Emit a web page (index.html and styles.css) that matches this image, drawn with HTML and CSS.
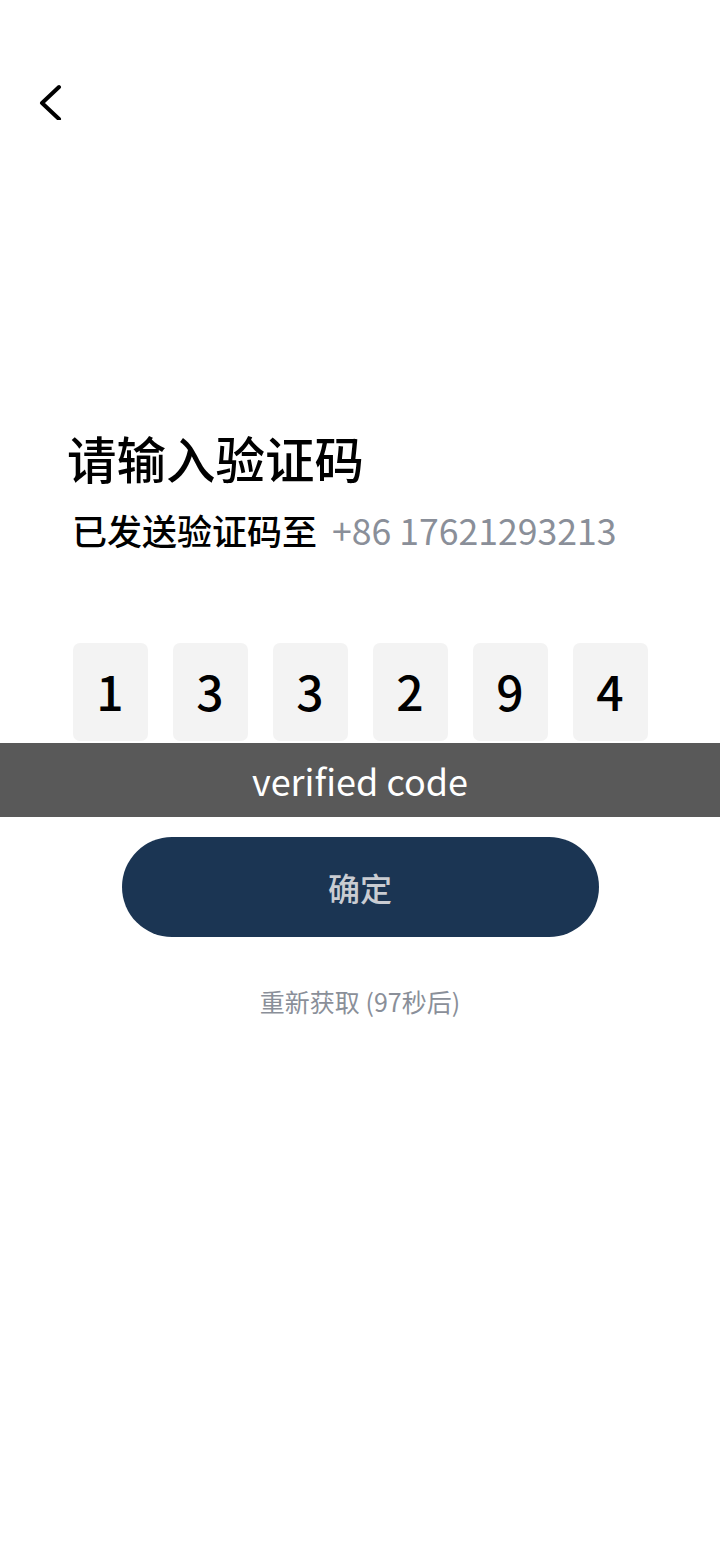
FILE: index.html
```html
<!DOCTYPE html>
<html lang="zh-CN">
<head>
  <meta charset="UTF-8" />
  <meta name="viewport" content="width=device-width, initial-scale=1.0"/>
  <title>验证码</title>
  <link rel="stylesheet" href="styles.css">
</head>
<body>
  <div class="page">
    <div class="top-bar">
      <a href="#" class="back-btn">
        <svg width="40" height="40" viewBox="0 0 40 40">
          <polyline points="29,7 12,23 29,39" fill="none" stroke="#000" stroke-width="4" stroke-linecap="round" stroke-linejoin="round"/>
        </svg>
      </a>
    </div>

    <div class="head">
      <h1>请输入验证码</h1>
      <p class="sub">已发送验证码至<span class="phone">+86 17621293213</span></p>
    </div>

    <div class="code-row">
      <div class="code-box">1</div>
      <div class="code-box">3</div>
      <div class="code-box">3</div>
      <div class="code-box">2</div>
      <div class="code-box">9</div>
      <div class="code-box">4</div>
    </div>

    <div class="toast">verified code</div>

    <button class="confirm-btn">确定</button>

    <p class="resend">重新获取 (97秒后)</p>
  </div>
</body>
</html>
```

FILE: styles.css
```css
:root {
  --navy: #1b3553;
  --gray-text: #8a8f99;
  --box-bg: #f3f3f3;
}

body {
  font-family: "Noto Sans CJK SC", "Noto Sans", sans-serif;
  margin: 0;
  padding: 0;
  background: #fff;
  color: #000;
}

.page {
  width: 720px;
  min-height: 1560px;
}

.top-bar {
  height: 433px;
  padding-left: 30px;
  padding-top: 80px;
  box-sizing: border-box;
}

.back-btn {
  display: inline-block;
  width: 40px;
  height: 40px;
}

.head {
  padding-left: 67px;
}

h1 {
  margin: 0;
  font-size: 49.5px;
  line-height: 50px;
  font-weight: 500;
}

.sub {
  margin: 30px 0 0 5px;
  font-size: 35px;
  line-height: 34px;
  font-weight: 500;
}

.phone {
  color: var(--gray-text);
  font-weight: 400;
  font-size: 35.6px;
  margin-left: 15px;
}

.code-row {
  display: flex;
  justify-content: center;
  gap: 25px;
  margin-top: 96px;
}

.code-box {
  width: 75px;
  height: 98px;
  padding-bottom: 4px;
  box-sizing: border-box;
  background: var(--box-bg);
  border-radius: 7px;
  display: flex;
  align-items: center;
  justify-content: center;
  font-size: 48px;
  font-weight: 500;
}

.toast {
  margin-top: 2px;
  height: 74px;
  background: #595959;
  color: #fff;
  display: flex;
  align-items: center;
  justify-content: center;
  font-size: 36px;
}

.confirm-btn {
  display: block;
  margin: 20px auto 0;
  width: 477px;
  height: 100px;
  border: none;
  border-radius: 50px;
  background: var(--navy);
  color: #c9ccd2;
  font-family: inherit;
  font-size: 32px;
  font-weight: 500;
}

.resend {
  margin: 47px 0 0;
  text-align: center;
  color: var(--gray-text);
  font-size: 25px;
  line-height: 34px;
}
```
